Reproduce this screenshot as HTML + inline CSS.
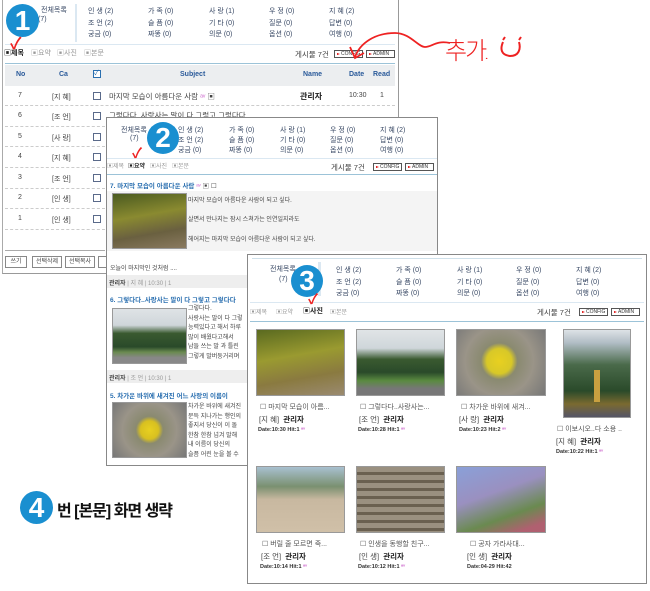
<!DOCTYPE html>
<html><head><meta charset="utf-8">
<style>
*{margin:0;padding:0;box-sizing:border-box}
body{width:650px;height:591px;background:#fff;position:relative;overflow:hidden;font-family:"Liberation Sans","Noto Sans CJK KR",sans-serif;font-size:7px;color:#444}
.a{position:absolute;white-space:nowrap}
.p{position:absolute;background:#fff;border:1px solid #999}
.c{color:#3a4a66}
.hl{position:absolute;height:1px;background:#9cc3d8}
.dl{position:absolute;height:0;border-top:1px dashed #ccc}
.btn{position:absolute;height:8px;border:1px solid #555;font-size:5px;line-height:6px;padding-left:6px;color:#333;background:#fff}
.btn:before{content:"";position:absolute;left:2px;top:2px;border-left:3px solid #d00;border-top:1.5px solid transparent;border-bottom:1.5px solid transparent}
.cb{position:absolute;width:8px;height:8px;border:1px solid #5a6a8a;background:#fff}
.circ{position:absolute;border-radius:50%;background:#1a8fd0;color:#fff;font-weight:bold;text-align:center;font-family:"Liberation Sans",sans-serif}
.ph{position:absolute;border:1px solid #999}
.b{font-weight:bold;color:#222}
.ttl{color:#2a6fb0;font-weight:bold}
.sm{font-size:5.5px;font-weight:bold;color:#333}
</style></head><body>

<!-- PANEL 1 -->
<div class="p" style="left:2px;top:0;width:397px;height:274px;border-top:none;border-left:1px solid #aaa">
 <div class="a c" style="left:38px;top:5px">전체목록</div>
 <div class="a c" style="left:35px;top:16px">(7)</div>
 <div class="a" style="left:72px;top:4px;width:2px;height:38px;background:#dbe8f2"></div>
</div>
<div class="a c" style="left:88px;top:6px">인 생 (2)</div><div class="a c" style="left:88px;top:18px">조 언 (2)</div><div class="a c" style="left:88px;top:29px">궁금 (0)</div>
<div class="a c" style="left:148px;top:6px">가 족 (0)</div><div class="a c" style="left:148px;top:18px">슬 픔 (0)</div><div class="a c" style="left:148px;top:29px">짜똥 (0)</div>
<div class="a c" style="left:209px;top:6px">사 랑 (1)</div><div class="a c" style="left:209px;top:18px">기 타 (0)</div><div class="a c" style="left:209px;top:29px">의문 (0)</div>
<div class="a c" style="left:269px;top:6px">우 정 (0)</div><div class="a c" style="left:269px;top:18px">질문 (0)</div><div class="a c" style="left:269px;top:29px">옵션 (0)</div>
<div class="a c" style="left:329px;top:6px">지 혜 (2)</div><div class="a c" style="left:329px;top:18px">답변 (0)</div><div class="a c" style="left:329px;top:29px">여행 (0)</div>
<div class="hl" style="left:5px;top:44px;width:390px;background:#dbe8f2"></div>
<div class="a" style="left:4px;top:48px;color:#222;font-weight:bold">▣제목</div>
<div class="a" style="left:31px;top:48px;color:#999">▣요약</div>
<div class="a" style="left:57px;top:48px;color:#999">▣사진</div>
<div class="a" style="left:84px;top:48px;color:#999">▣본문</div>
<div class="a" style="left:295px;top:49px;font-size:7.5px">게시물 7건</div>
<div class="btn" style="left:334px;top:50px;width:29px">CONFIG</div>
<div class="btn" style="left:366px;top:50px;width:29px">ADMIN</div>
<div class="hl" style="left:5px;top:63px;width:390px"></div>
<div class="a" style="left:5px;top:65px;width:390px;height:21px;background:#eceef0"></div>
<div class="a" style="left:16px;top:71px;color:#2a5a9a;font-weight:bold">No</div>
<div class="a" style="left:59px;top:71px;color:#2a5a9a;font-weight:bold">Ca</div>
<div class="cb" style="left:93px;top:70px;border-color:#2a6fb0;color:#2a6fb0;font-size:7px;line-height:6px">✓</div>
<div class="a" style="left:180px;top:71px;color:#2a5a9a;font-weight:bold">Subject</div>
<div class="a" style="left:303px;top:71px;color:#2a5a9a;font-weight:bold">Name</div>
<div class="a" style="left:349px;top:71px;color:#2a5a9a;font-weight:bold">Date</div>
<div class="a" style="left:373px;top:71px;color:#2a5a9a;font-weight:bold">Read</div>

<div class="a" style="left:18px;top:92px">7</div><div class="a" style="left:52px;top:92px">[지 혜]</div><div class="cb" style="left:93px;top:92px"></div><div class="a" style="left:109px;top:91px;font-size:7.5px">마지막 모습이 아름다운 사람 <span style="color:#c6c">ᵃᵛ</span> ▣</div><div class="a b" style="left:300px;top:91px;font-size:8px">관리자</div><div class="a" style="left:349px;top:92px">10:30</div><div class="a" style="left:380px;top:92px">1</div>
<div class="dl" style="left:5px;top:105px;width:390px"></div>
<div class="a" style="left:18px;top:112px">6</div><div class="a" style="left:52px;top:112px">[조 언]</div><div class="cb" style="left:93px;top:112px"></div><div class="a" style="left:109px;top:110px;font-size:7.5px">그렇다다..사랑사는 말이 다 그렇고 그렇다다</div>
<div class="dl" style="left:5px;top:126px;width:100px"></div>
<div class="a" style="left:18px;top:133px">5</div><div class="a" style="left:52px;top:133px">[사 랑]</div><div class="cb" style="left:93px;top:133px"></div>
<div class="dl" style="left:5px;top:146px;width:100px"></div>
<div class="a" style="left:18px;top:153px">4</div><div class="a" style="left:52px;top:153px">[지 혜]</div><div class="cb" style="left:93px;top:153px"></div>
<div class="dl" style="left:5px;top:167px;width:100px"></div>
<div class="a" style="left:18px;top:174px">3</div><div class="a" style="left:52px;top:174px">[조 언]</div><div class="cb" style="left:93px;top:174px"></div>
<div class="dl" style="left:5px;top:188px;width:100px"></div>
<div class="a" style="left:18px;top:194px">2</div><div class="a" style="left:52px;top:194px">[인 생]</div><div class="cb" style="left:93px;top:194px"></div>
<div class="dl" style="left:5px;top:208px;width:100px"></div>
<div class="a" style="left:18px;top:215px">1</div><div class="a" style="left:52px;top:215px">[인 생]</div><div class="cb" style="left:93px;top:215px"></div>
<div class="dl" style="left:5px;top:229px;width:100px"></div>
<div class="hl" style="left:5px;top:250px;width:100px;background:#aaa"></div>
<div class="a" style="left:5px;top:256px;width:22px;height:12px;border:1px solid #888;font-size:6px;text-align:center;line-height:10px">쓰기</div>
<div class="a" style="left:32px;top:256px;width:30px;height:12px;border:1px solid #888;font-size:6px;text-align:center;line-height:10px">선택삭제</div>
<div class="a" style="left:65px;top:256px;width:30px;height:12px;border:1px solid #888;font-size:6px;text-align:center;line-height:10px">선택복사</div>
<div class="a" style="left:98px;top:256px;width:10px;height:12px;border:1px solid #888"></div>

<div class="circ" style="left:6px;top:4px;width:33px;height:33px;font-size:28px;line-height:33px">1</div>
<div class="a" style="left:10px;top:30px;color:#e22;font-size:16px;font-weight:bold">✓</div>

<!-- red handwriting -->
<svg class="a" style="left:340px;top:25px" width="200" height="50" viewBox="0 0 200 50">
<path d="M15 32 C20 18 35 8 55 8 C70 8 78 22 85 22 C92 22 96 15 110 18" stroke="#e22" stroke-width="1.8" fill="none"/>
<path d="M10 22 L15 33 L24 28" stroke="#e22" stroke-width="1.8" fill="none"/>
<path d="M163 17 C160 24 161 30 170 31 C179 31 181 24 179 17" stroke="#e22" stroke-width="2" fill="none"/>
<path d="M163 15 L165 12 M179 15 L181 12" stroke="#e22" stroke-width="2"/>
</svg>
<div class="a" style="left:445px;top:31px;color:#e22;font-size:24px;font-family:'Noto Sans CJK KR',sans-serif;font-weight:300;letter-spacing:-2px">추가<span style="font-size:10px">..</span></div>

<!-- PANEL 2 -->
<div class="p" style="left:106px;top:117px;width:332px;height:349px;border-color:#888"></div>
<div class="a c" style="left:121px;top:125px">전체목록</div><div class="a c" style="left:130px;top:135px">(7)</div>
<div class="a c" style="left:178px;top:125px">인 생 (2)</div><div class="a c" style="left:178px;top:135px">조 언 (2)</div><div class="a c" style="left:178px;top:145px">궁금 (0)</div>
<div class="a c" style="left:229px;top:125px">가 족 (0)</div><div class="a c" style="left:229px;top:135px">슬 픔 (0)</div><div class="a c" style="left:229px;top:145px">짜똥 (0)</div>
<div class="a c" style="left:280px;top:125px">사 랑 (1)</div><div class="a c" style="left:280px;top:135px">기 타 (0)</div><div class="a c" style="left:280px;top:145px">의문 (0)</div>
<div class="a c" style="left:330px;top:125px">우 정 (0)</div><div class="a c" style="left:330px;top:135px">질문 (0)</div><div class="a c" style="left:330px;top:145px">옵션 (0)</div>
<div class="a c" style="left:380px;top:125px">지 혜 (2)</div><div class="a c" style="left:380px;top:135px">답변 (0)</div><div class="a c" style="left:380px;top:145px">여행 (0)</div>
<div class="hl" style="left:107px;top:158px;width:330px;background:#dbe8f2"></div>
<div class="a" style="left:107px;top:161px;color:#999;font-size:6px">▣제목</div>
<div class="a" style="left:128px;top:161px;color:#222;font-weight:bold;font-size:6px">▣요약</div>
<div class="a" style="left:150px;top:161px;color:#999;font-size:6px">▣사진</div>
<div class="a" style="left:172px;top:161px;color:#999;font-size:6px">▣본문</div>
<div class="a" style="left:331px;top:162px;font-size:7.5px">게시물 7건</div>
<div class="btn" style="left:373px;top:163px;width:29px">CONFIG</div>
<div class="btn" style="left:405px;top:163px;width:29px">ADMIN</div>
<div class="hl" style="left:107px;top:174px;width:330px"></div>
<div class="a" style="left:110px;top:180px;font-size:6.5px"><span class="ttl">7. 마지막 모습이 아름다운 사람</span> <span style="color:#c6c">ᵃᵛ</span> ▣ ☐</div>
<div class="a" style="left:107px;top:191px;width:330px;height:60px;background:#f4f4f4"></div>
<div class="ph" style="left:112px;top:193px;width:75px;height:56px;background:linear-gradient(170deg,#4a5a20,#8a8a30 40%,#6a6040 70%,#8a7a60)"></div>
<div class="a" style="left:188px;top:195px;font-size:6px">마지막 모습이 아름다운 사람이 되고 싶다.</div>
<div class="a" style="left:188px;top:214px;font-size:6px">살면서 만나지는 잠시 스쳐가는 인연일지라도</div>
<div class="a" style="left:188px;top:234px;font-size:6px">헤어지는 마지막 모습이 아름다운 사람이 되고 싶다.</div>
<div class="a" style="left:110px;top:263px;font-size:6px">오늘이 마지막인 것처럼 ....</div>
<div class="a" style="left:107px;top:275px;width:140px;height:13px;background:#eee"></div>
<div class="a" style="left:109px;top:278px;font-size:6px"><b>관리자</b> <span style="color:#999">| 지 혜 | 10:30 | 1</span></div>
<div class="a" style="left:110px;top:294px;font-size:6.5px"><span class="ttl">6. 그렇다다..사랑사는 말이 다 그렇고 그렇다다</span></div>
<div class="ph" style="left:112px;top:308px;width:75px;height:56px;background:linear-gradient(180deg,#dfe3e6 0,#cfd6da 30%,#3a5a30 45%,#2a4a2a 70%,#6a8a50 80%,#888 90%)"></div>
<div class="a" style="left:188px;top:305px;font-size:6px;line-height:9.6px">그렇다다.<br>사랑사는 말이 다 그렇<br>능력있다고 해서 하루<br>많이 배웠다고해서<br>남들 쓰는 말 과 틀린<br>그렇게 말버둥거리며</div>
<div class="a" style="left:107px;top:370px;width:140px;height:13px;background:#eee"></div>
<div class="a" style="left:109px;top:373px;font-size:6px"><b>관리자</b> <span style="color:#999">| 조 언 | 10:30 | 1</span></div>
<div class="a" style="left:110px;top:390px;font-size:6.5px"><span class="ttl">5. 차가운 바위에 새겨진 어느 사랑의 이름이</span></div>
<div class="ph" style="left:112px;top:402px;width:75px;height:56px;background:radial-gradient(circle at 50% 50%,#e8d020 0,#d8c020 20%,#8a8a70 30%,#9a9488 60%,#777 100%)"></div>
<div class="a" style="left:188px;top:403px;font-size:6px;line-height:9.6px">차가운 바위에 새겨진<br>문득 지나가는 행인의<br>좋지서 당신이 이 돌<br>한참 한참 넘겨 말해<br>내 이름이 당신의<br>슬픔 어린 눈을 볼 수</div>

<div class="circ" style="left:147px;top:122px;width:32px;height:32px;font-size:28px;line-height:32px">2</div>
<div class="a" style="left:132px;top:143px;color:#e22;font-size:14px;font-weight:bold">✓</div>

<!-- PANEL 3 -->
<div class="p" style="left:247px;top:254px;width:400px;height:330px;border-color:#888"></div>
<div class="hl" style="left:252px;top:258px;width:390px;background:#cfe0ea"></div>
<div class="a c" style="left:270px;top:264px">전체목록</div><div class="a c" style="left:279px;top:276px">(7)</div>
<div class="a" style="left:318px;top:262px;width:3px;height:34px;background:#dbe8f2"></div>
<div class="a c" style="left:336px;top:265px">인 생 (2)</div><div class="a c" style="left:336px;top:277px">조 언 (2)</div><div class="a c" style="left:336px;top:288px">궁금 (0)</div>
<div class="a c" style="left:396px;top:265px">가 족 (0)</div><div class="a c" style="left:396px;top:277px">슬 픔 (0)</div><div class="a c" style="left:396px;top:288px">짜똥 (0)</div>
<div class="a c" style="left:457px;top:265px">사 랑 (1)</div><div class="a c" style="left:457px;top:277px">기 타 (0)</div><div class="a c" style="left:457px;top:288px">의문 (0)</div>
<div class="a c" style="left:516px;top:265px">우 정 (0)</div><div class="a c" style="left:516px;top:277px">질문 (0)</div><div class="a c" style="left:516px;top:288px">옵션 (0)</div>
<div class="a c" style="left:576px;top:265px">지 혜 (2)</div><div class="a c" style="left:576px;top:277px">답변 (0)</div><div class="a c" style="left:576px;top:288px">여행 (0)</div>
<div class="hl" style="left:250px;top:302px;width:394px;background:#dbe8f2"></div>
<div class="a" style="left:250px;top:307px;color:#999;font-size:6px">▣제목</div>
<div class="a" style="left:276px;top:307px;color:#999;font-size:6px">▣요약</div>
<div class="a" style="left:303px;top:306px;color:#222;font-weight:bold;font-size:7px">▣사진</div>
<div class="a" style="left:330px;top:307px;color:#999;font-size:6px">▣본문</div>
<div class="a" style="left:537px;top:307px;font-size:7.5px">게시물 7건</div>
<div class="btn" style="left:579px;top:308px;width:29px">CONFIG</div>
<div class="btn" style="left:611px;top:308px;width:29px">ADMIN</div>
<div class="hl" style="left:250px;top:321px;width:394px"></div>

<div class="ph" style="left:256px;top:329px;width:89px;height:67px;background:linear-gradient(170deg,#5a6a20,#9a9a30 40%,#8a7a40 70%,#9a8a70)"></div>
<div class="ph" style="left:356px;top:329px;width:89px;height:67px;background:linear-gradient(180deg,#e0e4e6 0,#cfd6da 28%,#3a5a30 45%,#2a4a2a 65%,#5a8a40 78%,#777 90%)"></div>
<div class="ph" style="left:456px;top:329px;width:90px;height:67px;background:radial-gradient(circle at 48% 48%,#e8d020 0,#d8c828 22%,#8a8a70 32%,#9a9488 60%,#777 100%)"></div>
<div class="ph" style="left:563px;top:329px;width:68px;height:89px;background:linear-gradient(180deg,#dde2e6 0,#b0bcc4 15%,#4a6a4a 40%,#2a4a2a 70%,#7a6a30 85%,#556 100%)"></div>
<div class="a" style="left:594px;top:370px;width:6px;height:32px;background:#c8a040"></div>

<div class="a" style="left:260px;top:402px;font-size:7px;color:#555">☐ 마지막 모습이 아름...</div>
<div class="a" style="left:259px;top:414px;font-size:7.5px">[지 혜] &nbsp;<b style="color:#222">관리자</b></div>
<div class="a sm" style="left:258px;top:427px">Date:10:30 Hit:1 <span style="color:#c6c">ᵃᵛ</span></div>
<div class="a" style="left:360px;top:402px;font-size:7px;color:#555">☐ 그렇다다..사랑사는...</div>
<div class="a" style="left:359px;top:414px;font-size:7.5px">[조 언] &nbsp;<b style="color:#222">관리자</b></div>
<div class="a sm" style="left:358px;top:427px">Date:10:28 Hit:1 <span style="color:#c6c">ᵃᵛ</span></div>
<div class="a" style="left:461px;top:402px;font-size:7px;color:#555">☐ 차가운 바위에 새겨...</div>
<div class="a" style="left:459px;top:414px;font-size:7.5px">[사 랑] &nbsp;<b style="color:#222">관리자</b></div>
<div class="a sm" style="left:459px;top:427px">Date:10:23 Hit:2 <span style="color:#c6c">ᵃᵛ</span></div>
<div class="a" style="left:557px;top:424px;font-size:7px;color:#555">☐ 이보시오..다 소용 ..</div>
<div class="a" style="left:556px;top:436px;font-size:7.5px">[지 혜] &nbsp;<b style="color:#222">관리자</b></div>
<div class="a sm" style="left:556px;top:449px">Date:10:22 Hit:1 <span style="color:#c6c">ᵃᵛ</span></div>

<div class="ph" style="left:256px;top:466px;width:89px;height:67px;background:linear-gradient(180deg,#a8c0d0 0,#7a9070 30%,#c8b8a0 50%,#d0c0a8 100%)"></div>
<div class="ph" style="left:356px;top:466px;width:89px;height:67px;background:repeating-linear-gradient(180deg,#9a9080 0,#9a9080 5px,#6a6050 5px,#6a6050 8px)"></div>
<div class="ph" style="left:456px;top:466px;width:90px;height:67px;background:linear-gradient(160deg,#8aa0d8,#9a90c0 40%,#6a8a50 70%,#b06070 90%)"></div>

<div class="a" style="left:262px;top:539px;font-size:7px;color:#555">☐ 버릴 줄 모르면 죽...</div>
<div class="a" style="left:261px;top:551px;font-size:7.5px">[조 언] &nbsp;<b style="color:#222">관리자</b></div>
<div class="a sm" style="left:260px;top:564px">Date:10:14 Hit:1 <span style="color:#c6c">ᵃᵛ</span></div>
<div class="a" style="left:360px;top:539px;font-size:7px;color:#555">☐ 인생을 동행할 친구...</div>
<div class="a" style="left:359px;top:551px;font-size:7.5px">[인 생] &nbsp;<b style="color:#222">관리자</b></div>
<div class="a sm" style="left:358px;top:564px">Date:10:12 Hit:1 <span style="color:#c6c">ᵃᵛ</span></div>
<div class="a" style="left:470px;top:539px;font-size:7px;color:#555">☐ 공자 가라사대...</div>
<div class="a" style="left:467px;top:551px;font-size:7.5px">[인 생] &nbsp;<b style="color:#222">관리자</b></div>
<div class="a sm" style="left:467px;top:564px">Date:04-29 Hit:42</div>

<div class="circ" style="left:291px;top:265px;width:32px;height:32px;font-size:28px;line-height:32px">3</div>
<div class="a" style="left:308px;top:289px;color:#e22;font-size:14px;font-weight:bold">✓</div>

<!-- 4 -->
<div class="circ" style="left:20px;top:491px;width:33px;height:33px;font-size:28px;line-height:33px">4</div>
<div class="a" style="left:57px;top:497px;font-size:16px;font-weight:bold;color:#111;letter-spacing:-1px">번 [본문] 화면 생략</div>
</body></html>
